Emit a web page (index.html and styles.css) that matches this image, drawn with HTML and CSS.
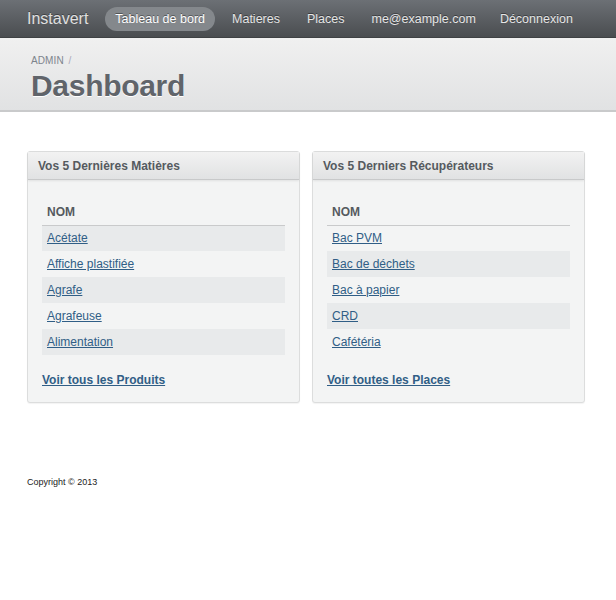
FILE: index.html
```html
<!DOCTYPE html>
<html lang="fr">
<head>
<meta charset="utf-8">
<title>Dashboard</title>
<link rel="stylesheet" href="styles.css">
</head>
<body>
<nav class="navbar">
  <a class="brand" href="#">Instavert</a>
  <ul class="nav">
    <li><a class="active" href="#">Tableau de bord</a></li>
    <li><a href="#">Matieres</a></li>
    <li><a href="#">Places</a></li>
    <li><a href="#">me@example.com</a></li>
    <li><a href="#">Déconnexion</a></li>
  </ul>
</nav>
<header class="page-header">
  <div class="breadcrumb">ADMIN <span class="sep">/</span></div>
  <h1>Dashboard</h1>
</header>
<main class="content">
  <section class="panel">
    <h2 class="panel-title">Vos 5 Dernières Matières</h2>
    <div class="panel-body">
      <table class="list">
        <thead><tr><th>NOM</th></tr></thead>
        <tbody class="odd-striped">
          <tr><td><a href="#">Acétate</a></td></tr>
          <tr><td><a href="#">Affiche plastifiée</a></td></tr>
          <tr><td><a href="#">Agrafe</a></td></tr>
          <tr><td><a href="#">Agrafeuse</a></td></tr>
          <tr><td><a href="#">Alimentation</a></td></tr>
        </tbody>
      </table>
      <a class="more" href="#">Voir tous les Produits</a>
    </div>
  </section>
  <section class="panel">
    <h2 class="panel-title">Vos 5 Derniers Récupérateurs</h2>
    <div class="panel-body">
      <table class="list">
        <thead><tr><th>NOM</th></tr></thead>
        <tbody class="even-striped">
          <tr><td><a href="#">Bac PVM</a></td></tr>
          <tr><td><a href="#">Bac de déchets</a></td></tr>
          <tr><td><a href="#">Bac à papier</a></td></tr>
          <tr><td><a href="#">CRD</a></td></tr>
          <tr><td><a href="#">Cafétéria</a></td></tr>
        </tbody>
      </table>
      <a class="more" href="#">Voir toutes les Places</a>
    </div>
  </section>
</main>
<footer class="footer">Copyright © 2013</footer>
</body>
</html>
```

FILE: styles.css
```css
* { box-sizing: border-box; }
html, body { margin: 0; padding: 0; background: #fff; }
body {
  font-family: "Liberation Sans", Arial, Helvetica, sans-serif;
  font-size: 12px;
  color: #333;
}
.navbar {
  height: 38px;
  display: flex;
  align-items: center;
  padding: 0 0 0 27px;
  background: linear-gradient(#6c7075, #4a4d50);
  border-bottom: 1px solid #3e4143;
  white-space: nowrap;
}
.brand {
  font-size: 16px;
  color: #e0e0e0;
  text-decoration: none;
  margin-right: 17px;
  flex-shrink: 0;
  text-shadow: 0 -1px 0 rgba(0,0,0,0.35);
}
.nav {
  list-style: none;
  margin: 0;
  padding: 0;
  display: flex;
  align-items: center;
}
.nav li { flex-shrink: 0; }
.nav a {
  display: block;
  font-size: 12.5px;
  color: #e6e6e6;
  text-decoration: none;
  padding: 5px 10px;
  border-radius: 12px;
  white-space: nowrap;
  text-shadow: 0 -1px 0 rgba(0,0,0,0.4);
}
.nav li:nth-child(1) a { margin-right: 7px; }
.nav li:nth-child(2) a { margin-right: 7px; }
.nav li:nth-child(3) a { margin-right: 7px; }
.nav li:nth-child(4) a { margin-right: 4px; }
.nav a.active {
  background: #84888c;
  color: #fff;
  height: 24px;
  line-height: 14px;
}
.page-header {
  height: 74px;
  padding: 17px 0 0 31px;
  background: linear-gradient(#f0f0f0, #e1e2e3);
  border-bottom: 2px solid #c9cacb;
}
.breadcrumb {
  font-size: 10px;
  color: #7d848c;
  letter-spacing: 0.1px;
  line-height: 12px;
}
.breadcrumb .sep { color: #aab; margin-left: 2px; }
.page-header h1 {
  margin: 2px 0 0 0;
  font-size: 30px;
  line-height: 34px;
  font-weight: bold;
  color: #60646a;
  letter-spacing: -0.3px;
  text-shadow: 0 1px 0 #fff;
}
.content {
  display: flex;
  gap: 12px;
  padding: 39px 0 0 27px;
}
.panel {
  width: 273px;
  background: #f3f4f4;
  border: 1px solid #dcdddd;
  border-radius: 3px;
  box-shadow: 0 1px 1px rgba(0,0,0,0.05);
}
.panel-title {
  margin: 0;
  height: 28px;
  line-height: 29px;
  padding-left: 10px;
  font-size: 12px;
  font-weight: bold;
  color: #555a5f;
  background: linear-gradient(#f2f2f2, #e1e2e3);
  border-bottom: 1px solid #c8c9ca;
  box-shadow: 0 1px 2px rgba(0,0,0,0.08);
}
.panel-body {
  padding: 19px 14px 15px 14px;
}
.list {
  width: 100%;
  border-collapse: collapse;
  margin-bottom: 18px;
}
.list th {
  text-align: left;
  font-size: 12px;
  font-weight: bold;
  color: #555a5f;
  height: 26px;
  padding: 0 5px 0;
  border-bottom: 1px solid #c9cacb;
}
.list td {
  height: 26px;
  padding: 0 5px;
  font-size: 12px;
}
.list a {
  color: #305e86;
  text-decoration: underline;
}
.odd-striped tr:nth-child(odd) td,
.even-striped tr:nth-child(even) td { background: #e8eaeb; }
.more {
  display: inline-block;
  font-weight: bold;
  color: #305e86;
  text-decoration: underline;
  font-size: 12px;
}
.footer {
  padding: 74px 0 0 27px;
  font-size: 9px;
  color: #222;
}
```
